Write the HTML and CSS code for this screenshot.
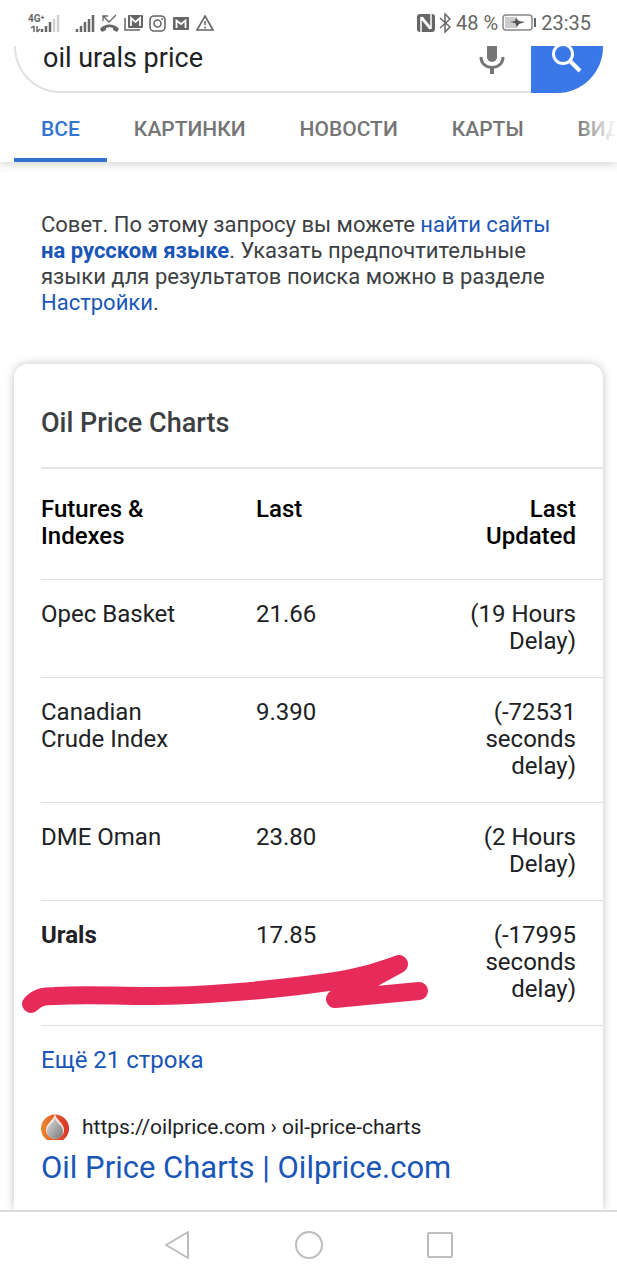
FILE: index.html
```html
<!DOCTYPE html>
<html lang="ru">
<head>
    <meta charset="UTF-8">
    <meta name="viewport" content="width=device-width, initial-scale=1">
    <title>oil urals price</title>
    <link rel="stylesheet" href="styles.css">
</head>
<body>
    <div class="status">
        <div class="status-left">
            <svg class="net" width="33" height="20" viewBox="0 0 33 20">
                <text x="0" y="9" class="net-label">4G⁺</text>
                <path d="M6 13v6M3 15l3-2M9 13v6M12 16l-3 3" stroke="#666" stroke-width="1.500" fill="none"/>
                <path d="M14 16v3M18 13v6M22 9v10" stroke="#666" stroke-width="2.500"/>
                <path d="M26 6v13M30 2v17" stroke="#d0d0d0" stroke-width="2.500"/>
            </svg>
            <svg class="signal" width="20" height="20" viewBox="0 0 20 20">
                <path d="M2 16v3M6 13v6M10 9v10M14 6v13M18 2v17" stroke="#666" stroke-width="2.500"/>
            </svg>
            <svg width="19" height="20" viewBox="0 0 19 20">
                <path d="M3 8V3h5M3 3l6 6 7-7" stroke="#666" stroke-width="1.300" fill="none"/>
                <path d="M0 16c4-6 15-6 19 0l-2 3-4-2v-2c-2-1-5-1-7 0v2l-4 2z" fill="#666"/>
            </svg>
            <svg width="20" height="20" viewBox="0 0 20 20">
                <path d="M1 5v12h15" stroke="#666" stroke-width="1.500" fill="none"/>
                <rect x="4" y="2" width="15" height="13" rx="1" fill="#666"/>
                <path d="M7 13V5l4.500 4L16 5v8" stroke="#fff" stroke-width="1.800" fill="none"/>
            </svg>
            <svg width="18" height="20" viewBox="0 0 18 20">
                <rect x="1" y="3" width="15" height="15" rx="4" stroke="#666" stroke-width="1.600" fill="none"/>
                <circle cx="8.500" cy="10.500" r="3.500" stroke="#666" stroke-width="1.600" fill="none"/>
                <circle cx="13" cy="6" r="1" fill="#666"/>
            </svg>
            <svg width="18" height="20" viewBox="0 0 18 20">
                <rect x="1" y="4" width="16" height="13" rx="1" fill="#666"/>
                <path d="M4.500 15V7.500L9 11l4.500-3.500V15" stroke="#fff" stroke-width="1.800" fill="none"/>
            </svg>
            <svg width="20" height="20" viewBox="0 0 20 20">
                <path d="M10 3l8 14H2z" stroke="#666" stroke-width="1.600" fill="none"/>
                <path d="M10 8v4M10 13.500v2" stroke="#666" stroke-width="1.600"/>
            </svg>
        </div>
        <div class="status-right">
            <svg class="nfc" width="18" height="20" viewBox="0 0 18 20">
                <rect x="0" y="1" width="18" height="18" rx="3" fill="#666"/>
                <path d="M4 19V4M4 5l9 11M5 4l9 11M14 16V1" stroke="#fff" stroke-width="1.500" fill="none"/>
            </svg>
            <svg class="bt" width="13" height="20" viewBox="0 0 13 20">
                <path d="M1 5l10 9-5 5V1l5 5-10 9" stroke="#666" stroke-width="1.500" fill="none"/>
            </svg>
            <span>48 %</span>
            <svg class="battery" width="35" height="20" viewBox="0 0 35 20">
                <rect x="1" y="2" width="29" height="15" rx="3" stroke="#888" stroke-width="1.500" fill="#fff"/>
                <path d="M3 4h12v11H3z" fill="#ccc"/>
                <path d="M8 9l5-1 1-3 3 3 6 1-6 2-2 3-2-4z" fill="#555"/>
                <path d="M33 5v9" stroke="#666" stroke-width="2"/>
            </svg>
            <time>23:35</time>
        </div>
    </div>

    <header class="top">
        <form class="search">
            <input class="query" type="text" value="oil urals price" aria-label="Поиск">
            <button class="mic" type="button" aria-label="Голосовой поиск">
                <svg width="26" height="30" viewBox="0 0 26 30">
                    <path d="M8 0h10v11a5 5 0 0 1-10 0z" fill="#757575"/>
                    <path d="M2 11c0 14 22 14 22 0" stroke="#757575" stroke-width="3" fill="none"/>
                    <path d="M13 21v7" stroke="#757575" stroke-width="4"/>
                </svg>
            </button>
            <button class="go" type="submit" aria-label="Найти">
                <svg width="32" height="30" viewBox="0 0 32 30">
                    <circle cx="12" cy="8" r="9.500" stroke="#fff" stroke-width="3" fill="none"/>
                    <path d="M18 14l11 11" stroke="#fff" stroke-width="4"/>
                </svg>
            </button>
        </form>
        <nav class="tabs">
            <a class="active" href="#all">ВСЕ</a>
            <a href="#images">КАРТИНКИ</a>
            <a href="#news">НОВОСТИ</a>
            <a href="#maps">КАРТЫ</a>
            <a href="#video">ВИДЕО</a>
        </nav>
    </header>

    <main>
        <p class="tip">Совет. По этому запросу вы можете <a href="#ru">найти сайты</a> <a href="#ru"><b>на русском языке</b></a>. Указать предпочтительные языки для результатов поиска можно в разделе <a href="#settings">Настройки</a>.</p>

        <div class="card">
            <h2>Oil Price Charts</h2>
            <table>
                <thead>
                    <tr>
                        <th>Futures &amp; Indexes</th>
                        <th>Last</th>
                        <th>Last Updated</th>
                    </tr>
                </thead>
                <tbody>
                    <tr>
                        <td>Opec Basket</td>
                        <td>21.66</td>
                        <td>(19 Hours Delay)</td>
                    </tr>
                    <tr>
                        <td>Canadian Crude Index</td>
                        <td>9.390</td>
                        <td>(-72531 seconds delay)</td>
                    </tr>
                    <tr>
                        <td>DME Oman</td>
                        <td>23.80</td>
                        <td>(2 Hours Delay)</td>
                    </tr>
                    <tr>
                        <td class="marked">
                            <b>Urals</b>
                            <svg class="marker" width="408" height="60" viewBox="0 0 408 60">
                                <path d="M10 49C17 42 22 41 34 41C66 39 90 41 130 41C180 41 250 35 300 28C335 24 355 17 378 9L314 44L398 36"/>
                            </svg>
                        </td>
                        <td>17.85</td>
                        <td>(-17995 seconds delay)</td>
                    </tr>
                </tbody>
            </table>
            <a class="more" href="#more">Ещё 21 строка</a>
            <div class="source">
                <svg width="28" height="28" viewBox="0 0 28 28">
                    <defs>
                        <linearGradient id="ring" x1="0" x2="1">
                            <stop offset="0" stop-color="#e88a2c"/>
                            <stop offset="1" stop-color="#d8302a"/>
                        </linearGradient>
                        <linearGradient id="drop" x1="0" x2="1" y2="1">
                            <stop offset="0" stop-color="#ddd"/>
                            <stop offset="1" stop-color="#777"/>
                        </linearGradient>
                    </defs>
                    <path d="M6 27a14 14 0 1 1 16 0z" fill="url(#ring)"/>
                    <path d="M14 1c1 6 9 9 9 16 0 5-4 8-9 9-5-1-9-4-9-9 0-7 8-10 9-16z" fill="#f6e4e0"/>
                    <path d="M14 5c1 5 8 7 8 13 0 5-3 7-8 8-5-1-8-3-8-8 0-6 7-8 8-13z" fill="url(#drop)"/>
                </svg>
                <cite>https://oilprice.com › oil-price-charts</cite>
            </div>
            <a class="result" href="#oilprice">Oil Price Charts | Oilprice.com</a>
        </div>
    </main>

    <footer class="navbar">
        <button type="button" aria-label="Назад">
            <svg width="30" height="30" viewBox="0 0 30 30"><path d="M25 2v26L3 15z"/></svg>
        </button>
        <button type="button" aria-label="Домой">
            <svg width="30" height="30" viewBox="0 0 30 30"><circle cx="15" cy="15" r="13"/></svg>
        </button>
        <button type="button" aria-label="Недавние">
            <svg width="30" height="30" viewBox="0 0 30 30"><rect x="3" y="3" width="24" height="24" rx="1"/></svg>
        </button>
    </footer>
</body>
</html>
```
FILE: styles.css
```css
*{
    box-sizing:border-box;
}

body{
    margin:0;
    height:100vh;
    display:flex;
    flex-direction:column;
    overflow:hidden;
    background-color:#fff;
    color:#202124;
    font-family:Roboto, "Liberation Sans", sans-serif;
}

a{
    color:#1a56b8;
    text-decoration:none;
}

button{
    border:0;
    padding:0;
    background:none;
}

svg{
    display:block;
}

/* status bar */
.status{
    position:relative;
    z-index:1;
    height:46px;
    flex:none;
    padding:0 26px 0 28px;
    display:flex;
    justify-content:space-between;
    align-items:center;
    background-color:#fff;
    color:#666;
    font-size:20px;
}

.status-left{
    display:flex;
    gap:5px;
}

.net-label{
    font-size:10px;
    font-weight:bold;
    fill:#666;
}

.signal{
    margin-left:9px;
}

.status-right{
    display:flex;
    align-items:center;
    gap:4px;
}

/* search */
.top{
    flex:none;
    box-shadow:0 3px 8px rgba(60,64,67,.2);
}

.search{
    height:47px;
    margin:0 14px;
    display:flex;
    border:2px solid #e2e2e2;
    border-top:0;
    border-right:0;
    border-radius:0 0 46px 46px;
}

.query{
    flex:1;
    min-width:0;
    border:0;
    padding:0 0 21px 27px;
    background:none;
    color:#202124;
    font-family:inherit;
    font-size:27px;
    outline:none;
}

.mic{
    width:78px;
    display:flex;
    justify-content:center;
}

.go{
    width:72px;
    margin-bottom:-2px;
    display:flex;
    justify-content:center;
    border-radius:0 0 46px 0;
    background-color:#3b78e7;
}

.tabs{
    position:relative;
    display:flex;
    padding-left:14px;
    overflow:hidden;
}

.tabs::after{
    content:"";
    position:absolute;
    top:0;
    right:0;
    width:40px;
    height:100%;
    background:linear-gradient(to right, rgba(255,255,255,0), #fff);
}

.tabs a{
    flex:none;
    height:69px;
    padding:0 27px;
    color:#757575;
    font-size:21px;
    font-weight:500;
    line-height:73px;
}

.tabs .active{
    color:#3274d0;
    border-bottom:4px solid #3274d0;
}

/* results */
main{
    flex:1;
    min-height:0;
    overflow:hidden;
    display:flex;
    flex-direction:column;
    padding:0 14px;
}

.tip{
    margin:50px 27px 48px;
    color:#3c4043;
    font-size:22px;
    line-height:26px;
}

.card{
    flex:1 0 auto;
    padding-left:27px;
    border-radius:14px 14px 0 0;
    box-shadow:0 0 10px rgba(0,0,0,.24);
}

.card h2{
    margin:0;
    color:#3c4043;
    font-size:27px;
    font-weight:500;
    line-height:32px;
    padding:43px 0 28px;
    border-bottom:2px solid #e4e4e4;
}

table{
    width:100%;
    table-layout:fixed;
    border-collapse:separate;
    border-spacing:0;
    font-size:24px;
    line-height:27px;
}

th,
td{
    padding:21px 0 22px;
    text-align:left;
    vertical-align:top;
    border-bottom:1px solid #dedede;
}

th{
    padding:27px 0 29px;
    color:#000;
    font-weight:500;
}

th:first-child,
td:first-child{
    width:215px;
    padding-right:50px;
}

th:last-child,
td:last-child{
    width:24%;
    padding-right:27px;
    text-align:right;
}

.marked{
    position:relative;
}

.marker{
    position:absolute;
    left:-20px;
    top:54px;
}

.marker path{
    fill:none;
    stroke:#e62b5b;
    stroke-width:18;
    stroke-linecap:round;
    stroke-linejoin:round;
}

.more{
    display:block;
    padding:20px 0;
    font-size:24px;
    line-height:28px;
}

.source{
    display:flex;
    align-items:center;
    gap:13px;
    margin-top:19px;
}

.source cite{
    font-size:21px;
    font-style:normal;
    line-height:24px;
}

.result{
    display:block;
    margin-top:9px;
    font-size:31px;
    line-height:36px;
}

/* system buttons */
.navbar{
    flex:none;
    height:70px;
    padding-bottom:2px;
    display:flex;
    justify-content:center;
    align-items:center;
    gap:101px;
    border-top:2px solid #dcdcdc;
    background-color:#fff;
    z-index:1;
}

.navbar svg{
    fill:none;
    stroke:#bdbdbd;
    stroke-width:2;
    stroke-linejoin:round;
}
```
